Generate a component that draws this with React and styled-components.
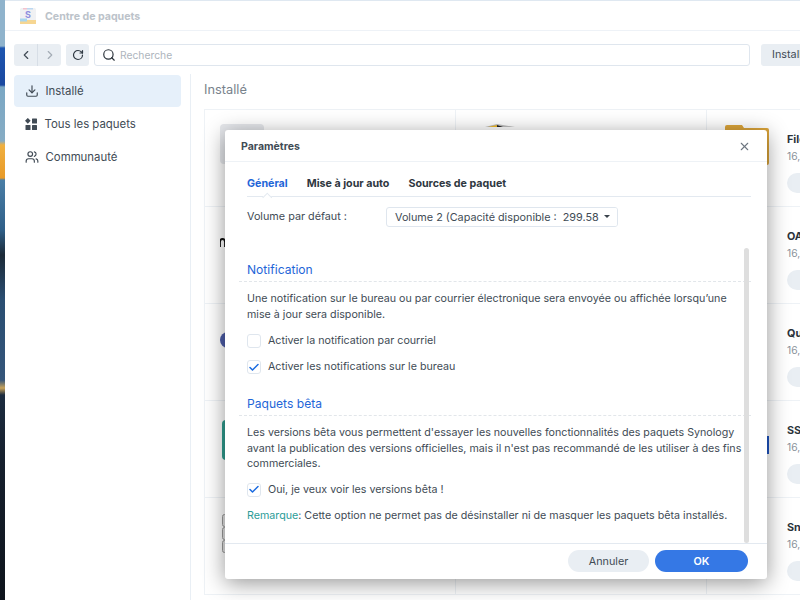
import React from "react";
import styled, { createGlobalStyle } from "styled-components";
import { ChevronLeft, ChevronRight, RotateCw, Search, Download, Users, X, Check } from "lucide-react";

const Global = createGlobalStyle`
  html, body { margin: 0; padding: 0; width: 800px; height: 600px; overflow: hidden; background: #fff; }
  body { font-family: Inter, "Noto Sans", sans-serif; color: #414b55; }
  * { box-sizing: border-box; }
`;

const Desktop = styled.div`
  position: relative;
  display: flex;
  width: 800px;
  height: 600px;
  overflow: hidden;
`;
const Wallpaper = styled.div`
  flex: 0 0 5px;
  height: 600px;
  background: linear-gradient(180deg,
    #8fb3cc 0, #8fb3cc 46px, #1e56b0 48px, #1a48a0 85px, #7aa7c4 87px, #86acc4 141px,
    #f0b040 145px, #e89a28 178px, #4a7ea6 180px, #2f5f88 230px, #1c2a38 255px, #2a4e72 300px,
    #34557a 380px, #c9a35a 388px, #1c2c40 395px, #16202e 460px, #0e141c 600px);
`;
const Window = styled.div`
  flex: 1;
  min-width: 0;
  display: flex;
  flex-direction: column;
  height: 600px;
  background: #fff;
  border-top: 1px solid #dfe8f1;
  overflow: hidden;
`;
const TitleBar = styled.div`
  flex: 0 0 30px;
  display: flex;
  align-items: center;
  gap: 8px;
  padding: 1px 0 0 14px;
  border-bottom: 1px solid #eef2f7;
`;
const AppTitle = styled.div`
  font-size: 10.6px;
  font-weight: 700;
  color: #bcc3ca;
`;
const Toolbar = styled.div`
  flex: 0 0 43px;
  display: flex;
  align-items: flex-start;
  padding: 13px 0 0 9px;
`;
const NavGroup = styled.div`
  flex: none;
  display: flex;
  width: 47px;
  height: 22px;
  border-radius: 3px;
  background: #e9eef3;
  margin-right: 5px;
`;
const NavButton = styled.div`
  flex: 1;
  display: flex;
  align-items: center;
  justify-content: center;
  color: ${p => (p.$off ? "#a4acb5" : "#414b55")};
  & + & { border-left: 1px solid #d7dee6; }
`;
const RefreshButton = styled.div`
  flex: none;
  width: 23px;
  height: 22px;
  border-radius: 3px;
  background: #e9eef3;
  display: flex;
  align-items: center;
  justify-content: center;
  margin-right: 5px;
  color: #2f3842;
`;
const SearchBox = styled.div`
  width: 656px;
  height: 22px;
  flex: none;
  border: 1px solid #dfe6ee;
  border-radius: 3px;
  display: flex;
  align-items: center;
  gap: 4px;
  padding-left: 7px;
  font-size: 10.3px;
  margin-right: 11px;
  color: #aeb5bd;
`;
const SearchIcon = styled(Search)`
  color: #2a323a;
`;
const InstallButton = styled.div`
  flex: none;
  width: 60px;
  height: 22px;
  background: #e9eef3;
  border-radius: 3px 0 0 3px;
  font-size: 10.8px;
  line-height: 22px;
  padding-left: 11px;
  color: #414b55;
  white-space: nowrap;
  overflow: hidden;
`;
const Main = styled.div`
  flex: 1;
  display: flex;
  min-height: 0;
`;
const Sidebar = styled.div`
  flex: 0 0 186px;
  padding: 1px 9px 0;
  border-right: 1px solid #e9eff5;
  display: flex;
  flex-direction: column;
  gap: 1px;
`;
const NavItem = styled.div`
  height: 32px;
  display: flex;
  align-items: center;
  gap: 6.5px;
  padding-left: 11px;
  border-radius: 4px;
  font-size: 11.4px;
  color: #414b55;
  background: ${p => (p.$active ? "#e6f0fa" : "transparent")};
`;
const NavIcon = styled.span`
  flex: 0 0 13px;
  display: flex;
  align-items: center;
  justify-content: center;
`;
const Content = styled.div`
  flex: 1;
  padding: 0 0 0 13px;
  min-width: 0;
`;
const ContentTitle = styled.div`
  height: 35px;
  font-size: 12.8px;
  line-height: 32px;
  color: #78828c;
`;
const CardGrid = styled.div`
  display: grid;
  grid-template-columns: 251px 251px 120px;
  grid-auto-rows: 97px;
  width: 622px;
  border-top: 1px solid #eef2f6;
  border-left: 1px solid #eef2f6;
`;
const Card = styled.div`
  position: relative;
  border-right: 1px solid #eef2f6;
  border-bottom: 1px solid #eef2f6;
  display: flex;
  overflow: hidden;
  padding: 16px 0 0 ${p => p.$inset}px;
`;
const CardIcon = styled.div`
  flex: 0 0 44px;
  height: 40px;
  margin-right: 18px;
  margin-top: ${p => p.$shift || 0}px;
`;
const CardInfo = styled.div`
  display: flex;
  flex-direction: column;
  white-space: nowrap;
`;
const CardName = styled.div`
  font-size: 10.8px;
  font-weight: 700;
  color: #2b333b;
  line-height: 14px;
  margin-top: 7px;
`;
const CardSize = styled.div`
  font-size: 10.3px;
  color: #8a929a;
  line-height: 14px;
  margin-top: 2px;
`;
const CardPill = styled.div`
  width: 60px;
  height: 20px;
  margin-top: 10px;
  border-radius: 10px;
  background: #e9eef3;
`;

const Dialog = styled.div`
  position: absolute;
  left: 225px;
  top: 130px;
  width: 542px;
  height: 449px;
  background: #fff;
  border-radius: 3px;
  box-shadow: 0 4px 22px rgba(0, 0, 0, 0.42);
  display: flex;
  flex-direction: column;
`;
const DialogHeader = styled.div`
  flex: 0 0 32px;
  display: flex;
  align-items: center;
  justify-content: space-between;
  padding: 1px 16px 0;
  border-bottom: 1px solid #eef2f6;
  font-size: 10.5px;
  font-weight: 700;
  color: #414b55;
`;
const CloseIcon = styled(X)`
  color: #6d7680;
`;
const Tabs = styled.div`
  position: relative;
  flex: none;
  display: flex;
  gap: 19px;
  height: 35px;
  margin: 0 16px 0 22px;
  border-bottom: 1px solid #e3e9f0;
  align-items: center;
  padding-top: 8px;
  font-size: 10.7px;
  font-weight: 700;
  color: #2e3740;
`;
const Tab = styled.span`
  color: ${p => (p.$active ? "#1f66d8" : "#2e3740")};
`;
const TabNotch = styled.span`
  position: absolute;
  left: 16px;
  bottom: -1px;
  width: 8px;
  height: 5px;
  background: #fff;
  &::after {
    content: "";
    position: absolute;
    left: 1px;
    top: 1.5px;
    width: 5.5px;
    height: 5.5px;
    background: #fff;
    border-left: 1px solid #e3e9f0;
    border-top: 1px solid #e3e9f0;
    transform: rotate(45deg);
  }
`;
const VolumeRow = styled.div`
  flex: none;
  height: 51px;
  display: flex;
  align-items: flex-start;
  padding: 10px 0 0 22px;
  font-size: 10.8px;
`;
const VolumeLabel = styled.div`
  flex: 0 0 139px;
  line-height: 19px;
`;
const Select = styled.div`
  flex: 0 0 232px;
  height: 20px;
  border: 1px solid #dfe6ee;
  border-radius: 3px;
  display: flex;
  align-items: center;
  padding-left: 8px;
  white-space: nowrap;
  overflow: hidden;
  position: relative;
`;
const Caret = styled.span`
  position: absolute;
  right: 0;
  top: 0;
  width: 18px;
  height: 18px;
  background: #fff;
  &::after {
    content: "";
    position: absolute;
    left: 5px;
    top: 7px;
    border-left: 3px solid transparent;
    border-right: 3px solid transparent;
    border-top: 3.5px solid #3a434c;
  }
`;
const Scroller = styled.div`
  flex: 1;
  position: relative;
  min-height: 0;
  padding: 12px 0 0 22px;
  font-size: 10.7px;
  line-height: 15.5px;
`;
const ScrollThumb = styled.div`
  position: absolute;
  right: 18px;
  top: 0;
  width: 5px;
  bottom: 0;
  border-radius: 3px;
  background: #dedede;
`;
const SectionTitle = styled.div`
  font-size: 12.1px;
  line-height: 20px;
  color: #1f66d8;
  height: 22px;
  margin: 0 0 9px -8px;
  padding-left: 8px;
  width: 512px;
  border-bottom: 1px dashed #e2e6ea;
`;
const Para = styled.div`
  width: 497px;
`;
const CheckRow = styled.div`
  display: flex;
  align-items: center;
  gap: 7px;
  height: 14px;
  margin-top: ${p => p.$mt}px;
`;
const Box = styled.span`
  flex: none;
  width: 14px;
  height: 14px;
  border: 1px solid #dfe6ee;
  border-radius: 3px;
  display: flex;
  align-items: center;
  justify-content: center;
  color: #1a6be0;
`;
const BetaTitle = styled(SectionTitle)`
  margin-top: 20px;
`;
const Remark = styled.div`
  margin-top: 11px;
  white-space: nowrap;
`;
const RemarkTag = styled.span`
  color: #2b9c98;
`;
const Footer = styled.div`
  flex: 0 0 36px;
  border-top: 1px solid #e3e9f0;
  display: flex;
  justify-content: flex-end;
  align-items: flex-start;
  padding: 6px 19px 0 0;
  gap: 6px;
`;
const Button = styled.div`
  height: 22px;
  border-radius: 11px;
  display: flex;
  align-items: center;
  justify-content: center;
  font-size: 10.8px;
  width: ${p => (p.$primary ? 93 : 81)}px;
  background: ${p => (p.$primary ? "#3578e5" : "#e9eef3")};
  color: ${p => (p.$primary ? "#fff" : "#414b55")};
  font-weight: ${p => (p.$primary ? 600 : 400)};
`;

const PackageLogo = () => (
  <svg width="18" height="18" viewBox="0 0 18 18">
    <rect x="1" y="1" width="16" height="16" rx="1.5" fill="#f0f1f3" />
    <rect x="1" y="13" width="16" height="4" fill="#f6d692" />
    <rect x="1" y="11.500" width="7" height="3" fill="#a9d6ee" />
    <rect x="4" y="1" width="4" height="1.500" fill="#f3c3cf" />
    <rect x="8" y="1" width="6" height="1.500" fill="#bcd8f2" />
    <text x="9" y="11" textAnchor="middle" fontSize="9" fontWeight="700" fill="#8f8fe0" fontFamily="Inter">S</text>
  </svg>
);
const GridIcon = () => (
  <svg width="13" height="13" viewBox="0 0 13 13" fill="#414b55">
    <rect x="0.8" y="0.8" width="4" height="4" transform="rotate(45 2.8 2.8)" />
    <rect x="7" y="0.5" width="5" height="5" rx="0.5" />
    <rect x="0.5" y="7" width="5" height="5" rx="0.5" />
    <rect x="7" y="7" width="5" height="5" rx="0.5" />
  </svg>
);
const Folder = () => (
  <svg width="44" height="40" viewBox="0 0 44 40">
    <path d="M0 2a2 2 0 0 1 2-2h15l2 3h23a2 2 0 0 1 2 2v33a2 2 0 0 1-2 2H2a2 2 0 0 1-2-2z" fill="#dca53a" />
  </svg>
);
const Disc = ({ color, r = 20, cx = 22 }) => (
  <svg width="44" height="40" viewBox="0 0 44 40">
    <circle cx={cx} cy="20" r={r} fill={color} />
  </svg>
);
const Square = ({ color, x = 0 }) => (
  <svg width="44" height="40" viewBox="0 0 44 40">
    <rect x={x} y="0" width={44 - x} height="40" rx="4" fill={color} />
  </svg>
);
const Band = ({ color }) => (
  <svg width="44" height="40" viewBox="0 0 44 40">
    <rect x="0" y="11" width="44" height="18" fill={color} />
  </svg>
);
const Stack = () => (
  <svg width="44" height="40" viewBox="0 0 44 40" fill="#e4e4e4" stroke="#9a9a9a">
    <rect x="2.500" y="0.5" width="41" height="12" rx="2" />
    <rect x="2.500" y="13.5" width="41" height="12" rx="2" />
    <rect x="2.500" y="26.5" width="41" height="12" rx="2" />
  </svg>
);
const Glyph = () => (
  <svg width="44" height="40" viewBox="0 0 44 40">
    <path d="M0 24v-5c0-2 1-3 2.5-3s2.500 1 2.500 3v5" fill="none" stroke="#111" strokeWidth="1.800" />
  </svg>
);
const Tag = () => (
  <svg width="44" height="40" viewBox="0 0 44 40">
    <path d="M9 3 21 0l18 3z" fill="#bdbdbd" />
    <path d="M12 3 21 1v2z" fill="#f0b92a" />
    <path d="M21 1l6 2h-6z" fill="#222" />
  </svg>
);

const rows = [
  { left: <Square color="#e6e8ec" />, leftShift: -2, mid: <Tag />, right: <Folder />, name: "FileStation", shift: -1 },
  { left: <Glyph />, right: <Disc color="#2fa58f" r={18} />, name: "OAuth Service", shift: 9 },
  { left: <Disc color="#4d5da8" r={8} cx={8} />, right: <Disc color="#1c46b8" r={18} />, name: "QuickConnect", shift: 8 },
  { left: <Square color="#2f9d8f" x={2} />, leftShift: 3, right: <Band color="#1f55c4" />, name: "SSO Server", shift: 8 },
  { left: <Stack />, right: <Disc color="#2fa58f" r={18} />, name: "SnapShot", shift: 8 },
];

const Sep = "\u00a0";

export default function App() {
  return (
    <Desktop>
      <Global />
      <Wallpaper />
      <Window>
        <TitleBar>
          <PackageLogo />
          <AppTitle>Centre de paquets</AppTitle>
        </TitleBar>
        <Toolbar>
          <NavGroup>
            <NavButton><ChevronLeft size={14} /></NavButton>
            <NavButton $off><ChevronRight size={14} /></NavButton>
          </NavGroup>
          <RefreshButton><RotateCw size={12} strokeWidth={2.4} /></RefreshButton>
          <SearchBox>
            <SearchIcon size={14} />
            Recherche
          </SearchBox>
          <InstallButton>Installer</InstallButton>
        </Toolbar>
        <Main>
          <Sidebar>
            <NavItem $active><NavIcon><Download size={14} /></NavIcon>Installé</NavItem>
            <NavItem><NavIcon><GridIcon /></NavIcon>Tous les paquets</NavItem>
            <NavItem><NavIcon><Users size={14} /></NavIcon>Communauté</NavItem>
          </Sidebar>
          <Content>
            <ContentTitle>Installé</ContentTitle>
            <CardGrid>
              {rows.map(r => (
                <React.Fragment key={r.name}>
                  <Card $inset={15}><CardIcon $shift={r.leftShift}>{r.left}</CardIcon></Card>
                  <Card $inset={20}><CardIcon $shift={-2}>{r.mid}</CardIcon></Card>
                  <Card $inset={18}>
                    <CardIcon $shift={r.shift}>{r.right}</CardIcon>
                    <CardInfo>
                      <CardName>{r.name}</CardName>
                      <CardSize>16,4 Mo</CardSize>
                      <CardPill />
                    </CardInfo>
                  </Card>
                </React.Fragment>
              ))}
            </CardGrid>
          </Content>
        </Main>
      </Window>
      <Dialog>
        <DialogHeader>
          Paramètres
          <CloseIcon size={13} strokeWidth={2} />
        </DialogHeader>
        <Tabs>
          <Tab $active>Général</Tab>
          <Tab>Mise à jour auto</Tab>
          <Tab>Sources de paquet</Tab>
          <TabNotch />
        </Tabs>
        <VolumeRow>
          <VolumeLabel>Volume par défaut :</VolumeLabel>
          <Select>
            Volume 2 (Capacité disponible :{Sep} 299.58 Go)
            <Caret />
          </Select>
        </VolumeRow>
        <Scroller>
          <ScrollThumb />
          <SectionTitle>Notification</SectionTitle>
          <Para>
            Une notification sur le bureau ou par courrier électronique sera envoyée ou affichée lorsqu’une mise à jour sera disponible.
          </Para>
          <CheckRow $mt={12}><Box />Activer la notification par courriel</CheckRow>
          <CheckRow $mt={12}><Box><Check size={13} strokeWidth={3} /></Box>Activer les notifications sur le bureau</CheckRow>
          <BetaTitle>Paquets bêta</BetaTitle>
          <Para>
            Les versions bêta vous permettent d'essayer les nouvelles fonctionnalités des paquets Synology avant la publication des versions officielles, mais il n'est pas recommandé de les utiliser à des fins commerciales.
          </Para>
          <CheckRow $mt={11}><Box><Check size={13} strokeWidth={3} /></Box>Oui, je veux voir les versions bêta !</CheckRow>
          <Remark><RemarkTag>Remarque</RemarkTag>: Cette option ne permet pas de désinstaller ni de masquer les paquets bêta installés.</Remark>
        </Scroller>
        <Footer>
          <Button>Annuler</Button>
          <Button $primary>OK</Button>
        </Footer>
      </Dialog>
    </Desktop>
  );
}
